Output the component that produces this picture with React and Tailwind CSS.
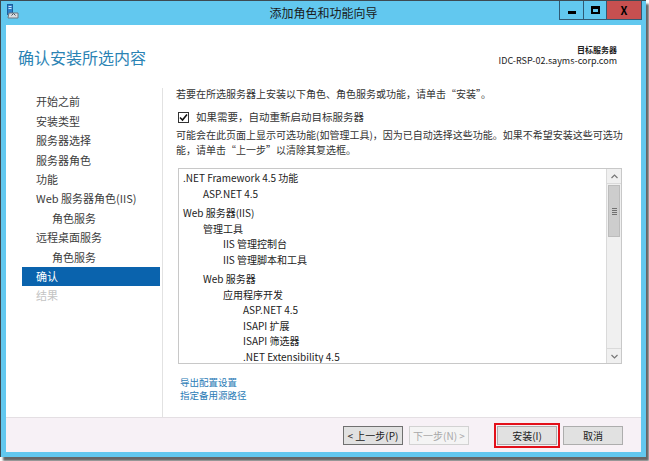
import React from "react";

const navItems = [
  { label: "开始之前" },
  { label: "安装类型" },
  { label: "服务器选择" },
  { label: "服务器角色" },
  { label: "功能" },
  { label: "Web 服务器角色(IIS)" },
  { label: "角色服务", indent: true },
  { label: "远程桌面服务" },
  { label: "角色服务", indent: true },
  { label: "确认", active: true },
  { label: "结果", disabled: true },
];

const features = [
  { label: ".NET Framework 4.5 功能", level: 0 },
  { label: "ASP.NET 4.5", level: 1 },
  { label: "Web 服务器(IIS)", level: 0, gap: true },
  { label: "管理工具", level: 1 },
  { label: "IIS 管理控制台", level: 2 },
  { label: "IIS 管理脚本和工具", level: 2 },
  { label: "Web 服务器", level: 1, gap: true },
  { label: "应用程序开发", level: 2 },
  { label: "ASP.NET 4.5", level: 3 },
  { label: "ISAPI 扩展", level: 3 },
  { label: "ISAPI 筛选器", level: 3 },
  { label: ".NET Extensibility 4.5", level: 3 },
];

const indent = ["pl-0", "pl-[20px]", "pl-[40px]", "pl-[60px]"];

function WizardIcon() {
  return (
    <svg width="12" height="15" viewBox="0 0 12 15">
      <rect x="0.5" y="0.5" width="5" height="10" fill="#2f7fc8" stroke="#1d5e9c" />
      <rect x="1.5" y="2" width="3" height="1" fill="#cfe6fa" />
      <rect x="1.5" y="4" width="3" height="1" fill="#cfe6fa" />
      <path d="M2 9 L11 9 L11 14 L1 14 Z" fill="#d9dde2" stroke="#6d7780" />
      <path d="M4.5 11.5 L6.5 9.5 L8.5 11.5" fill="none" stroke="#4b5560" strokeWidth="1" />
    </svg>
  );
}

function TitleButtons() {
  return (
    <div className="flex h-[19px] border border-t-0 border-[#2f5a74]">
      <div className="w-[24px] flex items-center justify-center border-r border-[#2f5a74]">
        <div className="w-[8px] h-[3px] bg-black mt-[4px]" />
      </div>
      <div className="w-[23px] flex items-center justify-center border-r border-[#2f5a74]">
        <div className="w-[9px] h-[8px] border-2 border-black border-t-[3px]" />
      </div>
      <div className="w-[34px] flex items-center justify-center bg-[#c75050] text-black font-bold text-[11px] leading-none">
        X
      </div>
    </div>
  );
}

function Checkbox() {
  return (
    <div className="w-[11px] h-[11px] border border-[#333] bg-white flex items-center justify-center">
      <svg width="9" height="9" viewBox="0 0 9 9">
        <path d="M1 4.5 L3.5 7 L8 1.5" fill="none" stroke="#111" strokeWidth="1.6" />
      </svg>
    </div>
  );
}

function Scrollbar() {
  return (
    <div className="w-[15px] flex flex-col bg-[#f0f0f0] border-l border-[#dadada]">
      <div className="h-[15px] flex items-center justify-center border-b border-[#dadada]">
        <svg width="7" height="5" viewBox="0 0 7 5">
          <path d="M0.5 4 L3.5 1 L6.5 4" fill="none" stroke="#777" strokeWidth="1.2" />
        </svg>
      </div>
      <div className="h-[52px] mx-[1px] mt-[1px] bg-[#cdcdcd] border border-[#bcbcbc] flex flex-col items-center justify-center gap-[1px]">
        <div className="w-[5px] h-[1px] bg-[#707070]" />
        <div className="w-[5px] h-[1px] bg-[#707070]" />
        <div className="w-[5px] h-[1px] bg-[#707070]" />
        <div className="w-[5px] h-[1px] bg-[#707070]" />
      </div>
      <div className="flex-1" />
      <div className="h-[15px] flex items-center justify-center border-t border-[#dadada]">
        <svg width="7" height="5" viewBox="0 0 7 5">
          <path d="M0.5 1 L3.5 4 L6.5 1" fill="none" stroke="#777" strokeWidth="1.2" />
        </svg>
      </div>
    </div>
  );
}

export default function App() {
  return (
    <div
      className="w-[649px] h-[461px] bg-white overflow-hidden"
      style={{ fontFamily: '"Noto Sans CJK SC", "Noto Sans", sans-serif' }}
    >
      <div className="w-[646px] h-[457px] bg-[#62c8ef] border-t border-l border-[#3d4a52] shadow-[3px_4px_2px_rgba(0,0,0,0.6)] flex flex-col">
        {/* Title bar */}
        <div className="h-[24px] grid grid-cols-[1fr_auto_1fr] items-start">
          <div className="pl-[6px] pt-[3px]">
            <WizardIcon />
          </div>
          <div className="text-[12px] leading-[24px] text-[#1a1a1a]">添加角色和功能向导</div>
          <div className="flex justify-end pr-[4px]">
            <TitleButtons />
          </div>
        </div>

        {/* Client area */}
        <div className="flex-1 mx-[5px] mb-[5px] bg-white flex flex-col">
          {/* Header */}
          <div className="h-[61px] flex justify-between items-start pl-[12px] pr-[24px]">
            <h1 className="mt-[22px] text-[16px] leading-[20px] text-[#2b83b4]">确认安装所选内容</h1>
            <div className="mt-[19px] text-right text-[#222]">
              <div className="text-[8px] leading-[11px] font-bold">目标服务器</div>
              <div className="text-[9px] leading-[11px]">IDC-RSP-02.sayms-corp.com</div>
            </div>
          </div>

          {/* Main */}
          <div className="h-[331px] flex">
            <div className="w-[157px] pl-[16px] pr-[2px] pt-[4px] border-r border-[#e2e2e2] mt-[2px]">
              {navItems.map((item, i) => (
                <div
                  key={i}
                  className={`h-[19.4px] flex items-center text-[11px] ${item.indent ? "pl-[30px]" : "pl-[14px]"} ${
                    item.active
                      ? "bg-[#0a63ad] text-white"
                      : item.disabled
                      ? "text-[#c4c4c4]"
                      : "text-[#3c3c3c]"
                  }`}
                >
                  {item.label}
                </div>
              ))}
            </div>

            <div className="flex-1 pl-[13px] pt-[1px] text-[10px] text-[#333]">
              <p className="leading-[14px]">若要在所选服务器上安装以下角色、角色服务或功能，请单击“安装”。</p>
              <div className="mt-[9px] h-[14px] flex items-center gap-[7px] pl-[2px]">
                <Checkbox />
                <span className="text-[10.5px]">如果需要，自动重新启动目标服务器</span>
              </div>
              <p className="mt-[3px] leading-[15px] w-[450px]">
                可能会在此页面上显示可选功能(如管理工具)，因为已自动选择这些功能。如果不希望安装这些可选功能，请单击“上一步”以清除其复选框。
              </p>

              <div className="mt-[11px] ml-[2px] w-[444px] h-[196px] border border-[#c8c8c8] flex">
                <div className="flex-1 pl-[4px] pt-[1px] overflow-hidden text-[#222]">
                  {features.map((f, i) => (
                    <div
                      key={i}
                      className={`h-[15.5px] leading-[15.5px] whitespace-nowrap ${indent[f.level]} ${f.gap ? "mt-[4px]" : ""}`}
                    >
                      {f.label}
                    </div>
                  ))}
                </div>
                <Scrollbar />
              </div>

              <div className="mt-[12px] pl-[4px] text-[#2a7bb6] text-[9.5px] leading-[13px]">
                <div>导出配置设置</div>
                <div>指定备用源路径</div>
              </div>
            </div>
          </div>

          {/* Bottom bar */}
          <div className="flex-1 bg-[#f7f1f6] border-t border-[#e4dfe3] flex items-center justify-end pr-[18px] text-[10px]">
            <button className="w-[60px] h-[19px] bg-[#e1e1e1] border border-[#707070] text-[#222]">&lt; 上一步(P)</button>
            <button className="ml-[6px] w-[60px] h-[19px] bg-[#f4f4f4] border border-[#d2d2d2] text-[#a8a8a8]">下一步(N) &gt;</button>
            <button className="ml-[28px] w-[60px] h-[19px] bg-[#e1e1e1] border border-[#adadad] text-[#222] outline-2 outline-[#e3101a] outline-offset-[1px]">安装(I)</button>
            <button className="ml-[6px] w-[60px] h-[19px] bg-[#e1e1e1] border border-[#adadad] text-[#222]">取消</button>
          </div>
        </div>
      </div>
    </div>
  );
}
